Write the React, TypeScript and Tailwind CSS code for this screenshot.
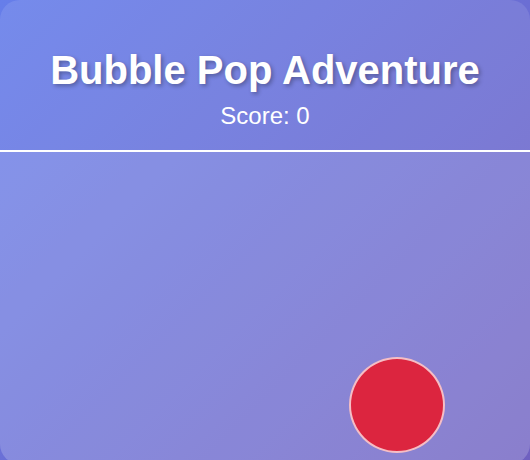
import React, { useState } from 'react';

const App: React.FC = () => {
  const [score, setScore] = useState(0);

  return (
    <div
      className="w-full h-[460px] overflow-hidden bg-[linear-gradient(135deg,#667eea_0%,#764ba2_172%)]"
      style={{ fontFamily: '"Liberation Sans", Arial, sans-serif' }}
    >
      <div className="flex flex-col h-[464px] rounded-[20px] bg-white/10 overflow-hidden">
        {/* Header */}
        <div className="h-[150px] shrink-0 flex flex-col items-center pt-[47px] text-white">
          <h1 className="text-[40px] leading-[46px] font-bold [text-shadow:2px_2px_4px_rgba(0,0,0,0.3)]">
            Bubble Pop Adventure
          </h1>
          <p className="mt-[9px] text-[24px] leading-[28px]">Score: {score}</p>
        </div>

        {/* Game area */}
        <div className="relative flex-1 border-t-2 border-white bg-white/10">
          <button
            onClick={() => setScore(score + 1)}
            className="absolute left-[349px] top-[205px] w-[96px] h-[96px] rounded-full bg-[#dc253f] border-2 border-white/70"
          />
        </div>
      </div>
    </div>
  );
};

export default App;
